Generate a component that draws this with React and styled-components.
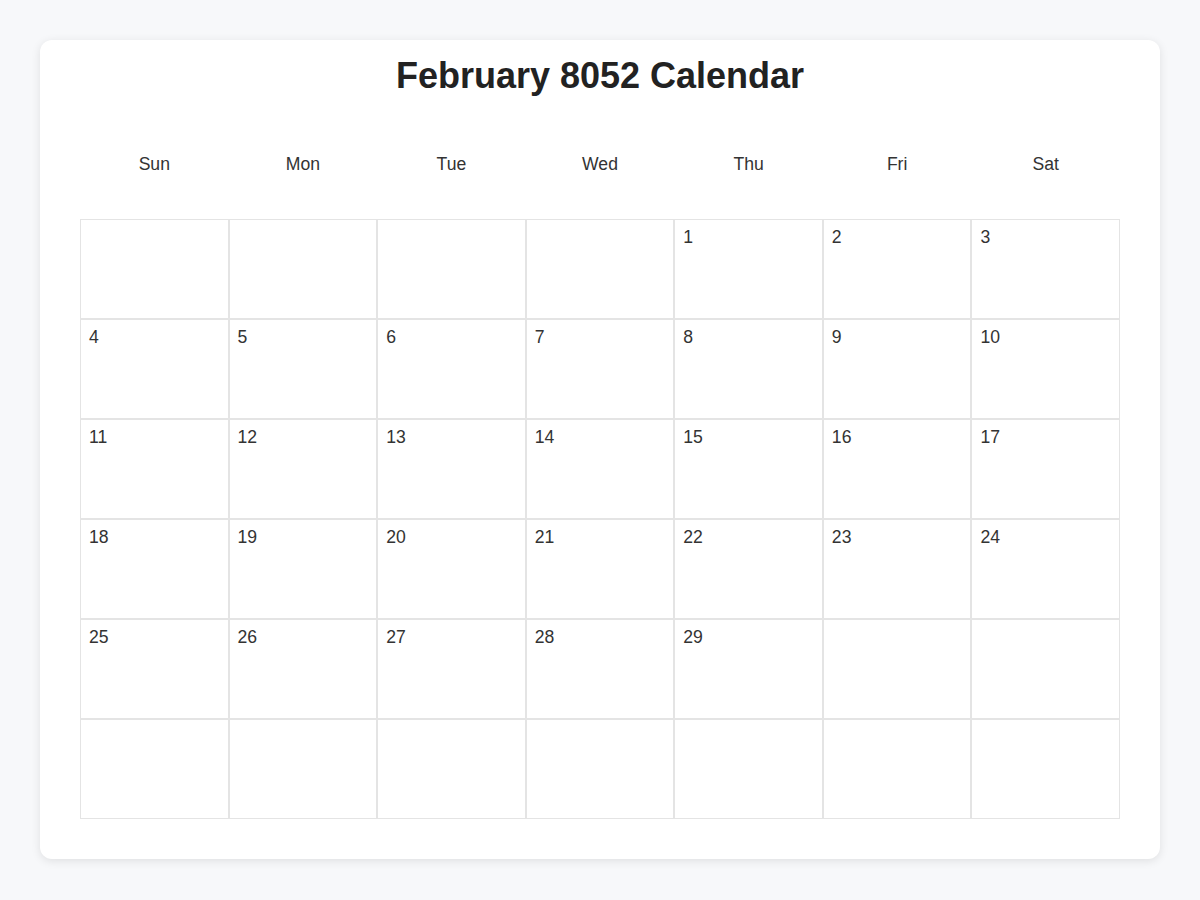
import React from "react";
import styled, { createGlobalStyle } from "styled-components";

const GlobalStyle = createGlobalStyle`
  html, body {
    margin: 0;
    padding: 0;
    background: #f7f8fa;
    font-family: "Liberation Sans", Arial, Helvetica, sans-serif;
    color: #333;
  }
`;

const Page = styled.div`
  padding: 40px;
`;

const Card = styled.div`
  background: #fff;
  border-radius: 12px;
  box-shadow: 0 2px 10px rgba(0, 0, 0, 0.1);
  padding: 15px 40px 40px;
`;

const Title = styled.h1`
  margin: 0;
  text-align: center;
  font-size: 36px;
  font-weight: 700;
  color: #222;
`;

const WeekRow = styled.div`
  display: grid;
  grid-template-columns: repeat(7, 1fr);
  margin-top: 47px;
  margin-bottom: 34px;
`;

const WeekDay = styled.div`
  padding: 10px 0;
  text-align: center;
  font-size: 17.6px;
  color: #333;
`;

const Grid = styled.div`
  display: grid;
  grid-template-columns: repeat(7, 1fr);
  grid-auto-rows: 100px;
`;

const Cell = styled.div`
  box-sizing: border-box;
  border: 1px solid #e4e4e4;
  padding: 7px 8px;
  font-size: 17.6px;
  color: #333;
`;

const days = ["Sun", "Mon", "Tue", "Wed", "Thu", "Fri", "Sat"];

// February 8052 starts on a Thursday and has 29 days
const firstDay = 4;
const totalDays = 29;
const cells = Array.from({ length: 42 }, (_, i) => {
  const d = i - firstDay + 1;
  return d >= 1 && d <= totalDays ? d : null;
});

export default function App() {
  return (
    <>
      <GlobalStyle />
      <Page>
        <Card>
          <Title>February 8052 Calendar</Title>
          <WeekRow>
            {days.map((d) => (
              <WeekDay key={d}>{d}</WeekDay>
            ))}
          </WeekRow>
          <Grid>
            {cells.map((d, i) => (
              <Cell key={i}>{d}</Cell>
            ))}
          </Grid>
        </Card>
      </Page>
    </>
  );
}
